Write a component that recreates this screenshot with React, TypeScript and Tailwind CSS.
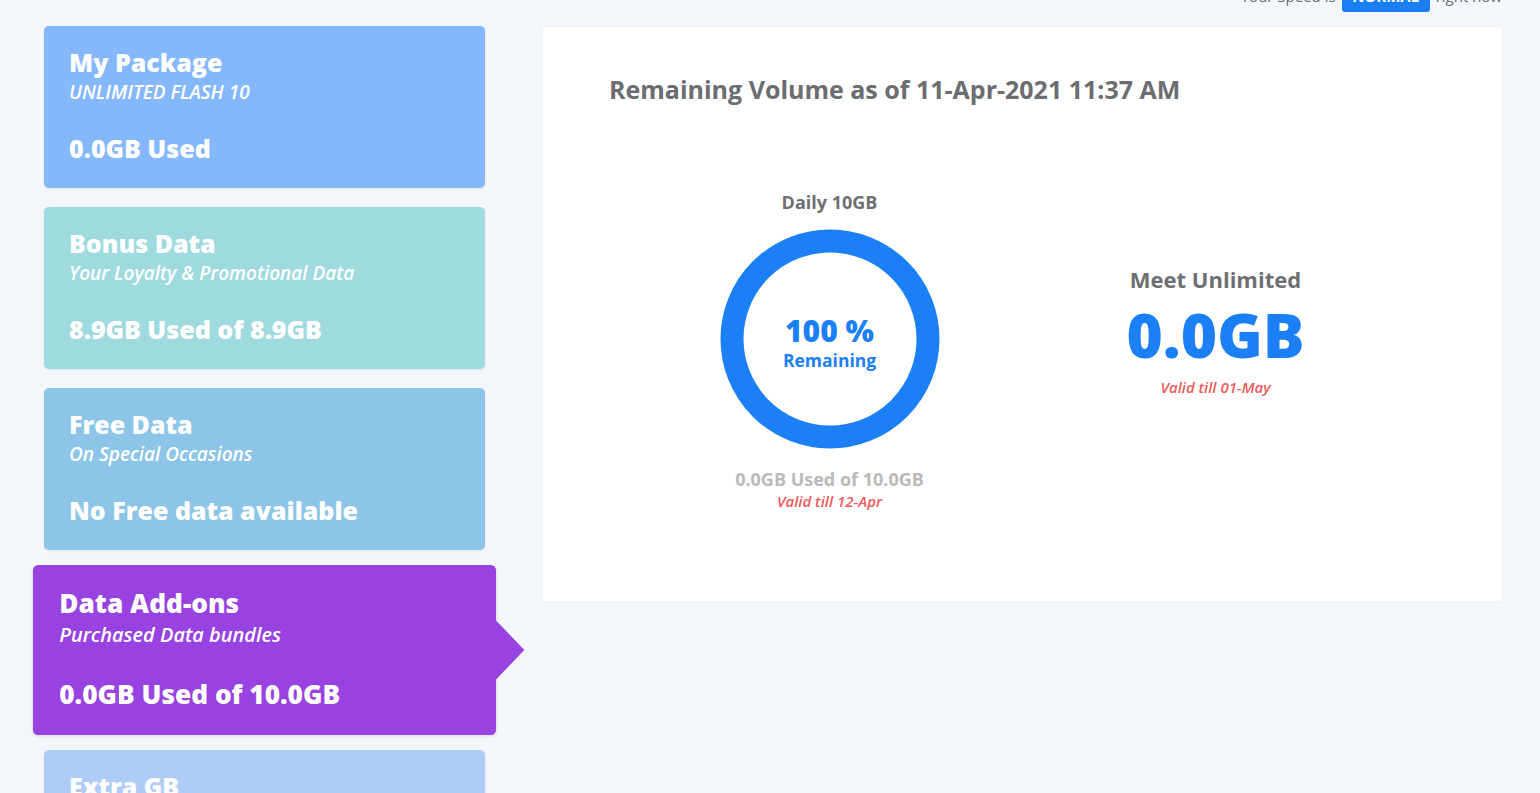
import React from 'react';

type Card = {
    title: string;
    sub: string;
    value: string;
    bg: string;
    active?: boolean;
};

const cards: Card[] = [
    { title: 'My Package', sub: 'UNLIMITED FLASH 10', value: '0.0GB Used', bg: 'bg-[#85b8fa]' },
    { title: 'Bonus Data', sub: 'Your Loyalty & Promotional Data', value: '8.9GB Used of 8.9GB', bg: 'bg-[#9fdadf]' },
    { title: 'Free Data', sub: 'On Special Occasions', value: 'No Free data available', bg: 'bg-[#8cc5e7]' },
    { title: 'Data Add-ons', sub: 'Purchased Data bundles', value: '0.0GB Used of 10.0GB', bg: 'bg-[#9843e1]', active: true },
    { title: 'Extra GB', sub: 'Extra data on your package', value: '0.0GB Used', bg: 'bg-[#afccf8]' },
];

function DataCard({ card }: { card: Card }) {
    return (
        <div
            className={`relative h-[162px] shrink-0 rounded-[5px] px-[25px] pt-[20px] text-white shadow-[0_1px_2px_rgba(0,0,0,0.08)] ${card.bg} ${
                card.active ? 'z-10 scale-105' : ''
            }`}
        >
            <div className="text-[25px] font-extrabold leading-[32px]">{card.title}</div>
            <div className="mt-[2px] text-[19px] font-semibold italic leading-[24px]">{card.sub}</div>
            <div className="mt-[28px] text-[25px] font-extrabold leading-[32px]">{card.value}</div>
            {card.active && (
                <div className="absolute left-full top-1/2 h-0 w-0 -translate-y-1/2 border-y-[28px] border-l-[27px] border-y-transparent border-l-[#9843e1]" />
            )}
        </div>
    );
}

function Donut() {
    return (
        <div className="relative h-[220px] w-[220px]">
            <svg width="220" height="220" viewBox="0 0 220 220" className="absolute inset-0">
                <circle cx="110" cy="110" r="98" fill="none" stroke="#1b7ff6" strokeWidth="23" />
            </svg>
            <div className="absolute inset-0 flex flex-col items-center justify-center text-[#1b7ff6]">
                <div className="mt-[6px] text-[30px] font-extrabold leading-[34px]">100 %</div>
                <div className="mt-[1px] text-[17.5px] font-bold leading-[22px]">Remaining</div>
            </div>
        </div>
    );
}

export default function App() {
    return (
        <div className="h-[793px] overflow-hidden bg-[#f3f6fb] font-['Open_Sans',sans-serif]">
            <div className="-mt-[20px]">
                <div className="flex h-[32px] items-center justify-end gap-[6px] pr-[38px] text-[15px] text-[#6b6d70]">
                    <span>Your Speed is</span>
                    <span className="flex h-[32px] w-[88px] items-center justify-center rounded-[3px] bg-[#1a7ff5] font-bold text-white">
                        NORMAL
                    </span>
                    <span>right now</span>
                </div>
                <div className="mt-[14px] flex gap-[58px] pl-[44px] pr-[38px]">
                    <div className="flex w-[441px] shrink-0 flex-col gap-[19px]">
                        {cards.map((c) => (
                            <DataCard key={c.title} card={c} />
                        ))}
                    </div>
                    <div className="mt-[1px] h-[574px] flex-1 bg-white pl-[66px] pt-[46px] shadow-[0_0_3px_rgba(0,0,0,0.04)]">
                        <div className="text-[25px] font-bold leading-[32px] text-[#6b6d70]">
                            Remaining Volume as of 11-Apr-2021 11:37 AM
                        </div>
                        <div className="ml-[-66px] mt-[85px] flex items-start justify-center">
                            <div className="flex w-[386px] flex-col items-center">
                                <div className="text-[18px] font-bold leading-[24px] text-[#6d6f72]">Daily 10GB</div>
                                <div className="mt-[15px]">
                                    <Donut />
                                </div>
                                <div className="mt-[18px] text-[18px] font-bold leading-[24px] text-[#bababa]">
                                    0.0GB Used of 10.0GB
                                </div>
                                <div className="text-[15px] font-semibold italic leading-[20px] text-[#f0595a]">Valid till 12-Apr</div>
                            </div>
                            <div className="flex w-[386px] flex-col items-center pt-[75px]">
                                <div className="text-[22px] font-bold leading-[28px] text-[#6d6f72]">Meet Unlimited</div>
                                <div className="mt-[8px] text-[62px] font-extrabold leading-[66px] text-[#1b7ff6]">0.0GB</div>
                                <div className="mt-[10px] text-[15px] font-semibold italic leading-[20px] text-[#f0595a]">Valid till 01-May</div>
                            </div>
                        </div>
                    </div>
                </div>
            </div>
        </div>
    );
}
